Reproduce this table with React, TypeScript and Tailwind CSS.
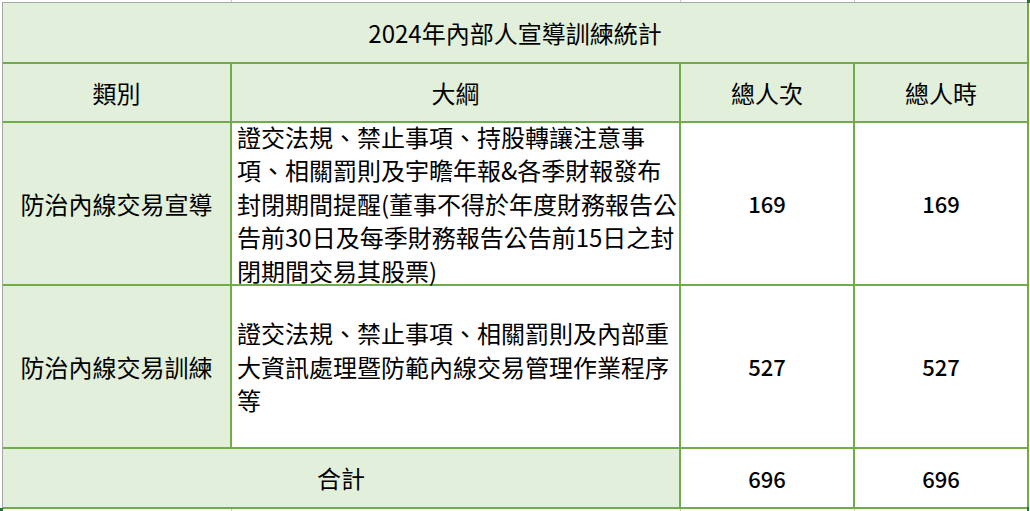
const cols = ['w-[229px]', 'w-[449px]', 'w-[174px]', 'w-[174px]'];

const font = { fontFamily: '"Noto Sans CJK TC", "Noto Sans CJK SC", sans-serif' };

const GridStrip = ({ h }: { h: string }) => (
  <div className={`flex pl-[3px] ${h}`}>
    {cols.map((c, i) => (
      <div key={i} className={`${c} border-r border-[#c8c8c8]`} />
    ))}
  </div>
);

const rows = [
  {
    label: '防治內線交易宣導',
    lines: [
      '證交法規、禁止事項、持股轉讓注意事',
      '項、相關罰則及宇瞻年報&各季財報發布',
      '封閉期間提醒(董事不得於年度財務報告公',
      '告前30日及每季財務報告公告前15日之封',
      '閉期間交易其股票)',
    ],
    count: 169,
    hours: 169,
  },
  {
    label: '防治內線交易訓練',
    lines: [
      '證交法規、禁止事項、相關罰則及內部重',
      '大資訊處理暨防範內線交易管理作業程序',
      '等',
    ],
    count: 527,
    hours: 527,
  },
];

export default function App() {
  return (
    <div className="relative w-[1030px] h-[511px] overflow-hidden bg-white text-black" style={font}>
      <GridStrip h="h-[2px]" />

      <div className="ml-[2px] w-[1027px] border-l border-t border-[#a6a6a6]">
        {/* title */}
        <div className="flex h-[61px] items-center justify-center border-r-2 border-b-2 border-[#70ad47] bg-[#e2efda] text-[24px]">
          2024年內部人宣導訓練統計
        </div>

        {/* header */}
        <div className="flex h-[59px] text-[24px]">
          {['類別', '大綱', '總人次', '總人時'].map((t, i) => (
            <div
              key={t}
              className={`${cols[i]} flex items-center justify-center border-r-2 border-b-2 border-[#70ad47] bg-[#e2efda]`}
            >
              {t}
            </div>
          ))}
        </div>

        {rows.map((r) => (
          <div key={r.label} className="flex h-[163px] text-[24px]">
            <div className={`${cols[0]} flex items-center justify-center border-r-2 border-b-2 border-[#70ad47] bg-[#e2efda]`}>
              {r.label}
            </div>
            <div className={`${cols[1]} flex flex-col justify-center border-r-2 border-b-2 border-[#70ad47] pl-[5px] leading-[33.5px]`}>
              {r.lines.map((l) => (
                <div key={l} className="whitespace-nowrap">
                  {l}
                </div>
              ))}
            </div>
            <div className={`${cols[2]} flex items-center justify-center border-r-2 border-b-2 border-[#70ad47] text-[22px] font-medium`}>
              {r.count}
            </div>
            <div className={`${cols[3]} flex items-center justify-center border-r-2 border-b-2 border-[#70ad47] text-[22px] font-medium`}>
              {r.hours}
            </div>
          </div>
        ))}

        {/* total */}
        <div className="flex h-[60px] text-[24px]">
          <div className="w-[678px] flex items-center justify-center border-r-2 border-b-2 border-[#70ad47] bg-[#e2efda]">
            合計
          </div>
          <div className={`${cols[2]} flex items-center justify-center border-r-2 border-b-2 border-[#70ad47] text-[22px] font-medium`}>
            696
          </div>
          <div className={`${cols[3]} flex items-center justify-center border-r-2 border-b-2 border-[#70ad47] text-[22px] font-medium`}>
            696
          </div>
        </div>
      </div>

      <GridStrip h="h-[3px]" />

      {/* selection corner marks */}
      <div className="absolute left-[1027px] top-0 h-[3px] w-[3px] bg-[#217346]" />
      <div className="absolute left-0 top-[508px] h-[3px] w-[3px] bg-[#217346]" />
      <div className="absolute left-[1027px] top-[507px] h-[4px] w-[2px] bg-[#217346]" />
    </div>
  );
}
